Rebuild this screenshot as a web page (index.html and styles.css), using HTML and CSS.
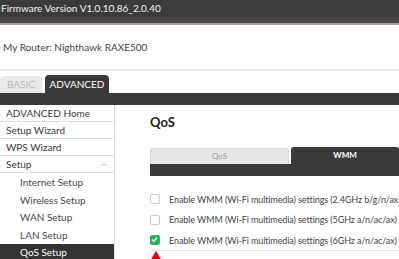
FILE: index.html
```html
<!DOCTYPE html>
<html>
<head>
    <meta charset="UTF-8">
    <title>NETGEAR Router - QoS Setup</title>
    <link rel="stylesheet" href="styles.css">
</head>
<body>
    <div class="topbar">Firmware Version V1.0.10.86_2.0.40</div>
    <div class="band"></div>
    <div class="router">My Router: Nighthawk RAXE500</div>

    <div class="tabs">
        <div class="tab tab-basic">BASIC</div>
        <div class="tab tab-advanced">ADVANCED</div>
    </div>
    <div class="tabbar"></div>

    <div class="layout">
        <!-- Sidebar menu -->
        <div class="sidebar">
            <div class="menu-item">ADVANCED Home</div>
            <div class="menu-item">Setup Wizard</div>
            <div class="menu-item">WPS Wizard</div>
            <div class="menu-item menu-open">Setup <span class="dash">—</span></div>
            <div class="submenu">
                <div class="sub-item">Internet Setup</div>
                <div class="sub-item">Wireless Setup</div>
                <div class="sub-item">WAN Setup</div>
                <div class="sub-item">LAN Setup</div>
                <div class="sub-item sub-active">QoS Setup</div>
            </div>
        </div>

        <!-- Main content -->
        <div class="main">
            <h1>QoS</h1>
            <div class="subtabs">
                <div class="subtab subtab-off">QoS</div>
                <div class="subtab subtab-on">WMM</div>
            </div>
            <div class="subtabbar"></div>

            <div class="options">
                <label class="option">
                    <span class="box"></span>
                    Enable WMM (Wi-Fi multimedia) settings (2.4GHz b/g/n/ax)
                </label>
                <label class="option">
                    <span class="box"></span>
                    Enable WMM (Wi-Fi multimedia) settings (5GHz a/n/ac/ax)
                </label>
                <label class="option option-last">
                    <span class="box box-checked">
                        <svg width="9" height="9" viewBox="0 0 9 9"><path d="M2 4.6 L3.8 6.3 L7 2.8" fill="none" stroke="#fff" stroke-width="1.4"/></svg>
                    </span>
                    Enable WMM (Wi-Fi multimedia) settings (6GHz a/n/ac/ax)
                </label>
            </div>
            <svg class="arrow" width="12" height="10" viewBox="0 0 12 10"><path d="M6 0 L12 10 L0 10 Z" fill="#e3001b"/></svg>
        </div>
    </div>
</body>
</html>
```

FILE: styles.css
```css
body {
    margin: 0;
    font-family: Lato, 'Open Sans', sans-serif;
    background: white;
    overflow: hidden;
    width: 399px;
    height: 259px;
}
.topbar {
    height: 17px;
    line-height: 17px;
    background: #3b3b3b;
    color: #f2f2f2;
    font-size: 10px;
    padding-left: 1px;
    white-space: nowrap;
}
.band {
    height: 6px;
    background: #4a4649;
    border-bottom: 2px solid #a3a3a3;
}
.router {
    height: 44px;
    line-height: 44px;
    padding-left: 3px;
    font-size: 10px;
    color: #444;
    border-bottom: 2px solid #e9e9e9;
}
.tabs {
    display: flex;
    align-items: flex-end;
    height: 22px;
    gap: 3px;
}
.tab {
    font-size: 10px;
    border-radius: 4px 4px 0 0;
    text-align: center;
}
.tab-basic {
    width: 42px;
    height: 17px;
    line-height: 17px;
    background: #e8e8e8;
    color: #b8b8b8;
}
.tab-advanced {
    width: 64px;
    height: 18px;
    line-height: 18px;
    background: #3a3a3a;
    color: #fff;
}
.tabbar {
    height: 12px;
    background: #3a3a3a;
}
.layout {
    display: flex;
}
.sidebar {
    width: 114px;
    flex-shrink: 0;
    border-right: 1px solid #dcdcdc;
    height: 160px;
}
.menu-item {
    height: 16px;
    line-height: 16px;
    border-bottom: 1px solid #dcdcdc;
    padding-left: 6px;
    font-size: 10px;
    color: #3a3a3a;
    display: flex;
    justify-content: space-between;
}
.dash {
    color: #aaa;
    padding-right: 7px;
    font-size: 8px;
}
.submenu {
    padding-top: 1px;
}
.sub-item {
    height: 17.5px;
    line-height: 17.5px;
    padding-left: 20px;
    font-size: 10px;
    color: #4a4a4a;
}
.sub-active {
    background: #333;
    color: #fff;
}
.main {
    flex: 1;
    min-width: 0;
    padding-left: 35px;
}
h1 {
    font-size: 13px;
    font-weight: bold;
    color: #222;
    margin: 10px 0 0;
    height: 32px;
    line-height: 14px;
}
.subtabs {
    display: flex;
    align-items: flex-end;
    gap: 2px;
    height: 17px;
}
.subtab {
    font-size: 8px;
    text-align: center;
    border-radius: 3px 3px 0 0;
}
.subtab-off {
    width: 137px;
    height: 15px;
    line-height: 15px;
    background: #e6e6e6;
    border: 1px solid #d8d8d8;
    border-bottom: none;
    color: #999;
}
.subtab-on {
    flex: 1;
    height: 17px;
    line-height: 17px;
    background: #3a3a3a;
    color: #fff;
    font-weight: bold;
}
.subtabbar {
    height: 12px;
    background: #3a3a3a;
}
.options {
    margin-top: 13px;
}
.option {
    display: flex;
    align-items: center;
    height: 20.5px;
    font-size: 9px;
    letter-spacing: -0.1px;
    color: #444;
    white-space: nowrap;
}
.option-last {
    height: 20px;
    border-bottom: 1px solid #e6e6e6;
}
.box {
    width: 8px;
    height: 8px;
    border: 1px solid #c8c8c8;
    border-radius: 2px;
    margin-right: 9px;
    flex-shrink: 0;
    display: flex;
}
.box-checked {
    background: #27b35d;
    border-color: #27b35d;
}
.box svg {
    margin: -1px;
}
.arrow {
    display: block;
}
```
